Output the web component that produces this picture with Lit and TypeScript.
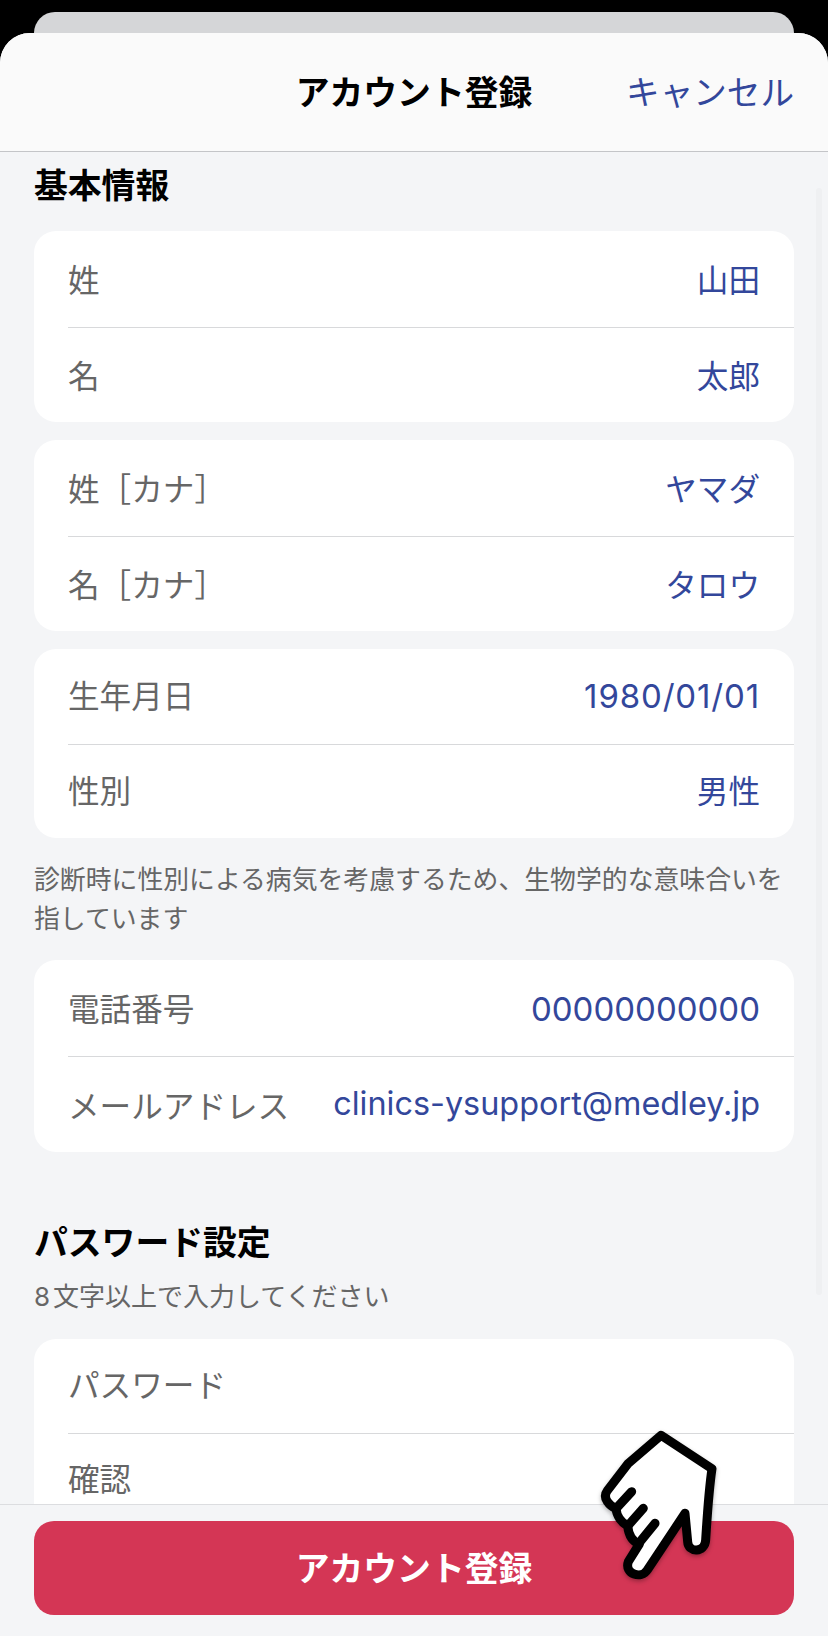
import { LitElement, html, css } from 'lit';
import { customElement } from 'lit/decorators.js';

type Row = { label: string; value?: string; kind?: 'latin' | 'date' | 'email' };

const group1: Row[] = [{ label: '姓', value: '山田' }, { label: '名', value: '太郎' }];
const group2: Row[] = [{ label: '姓［カナ］', value: 'ヤマダ' }, { label: '名［カナ］', value: 'タロウ' }];
const group3: Row[] = [{ label: '生年月日', value: '1980/01/01', kind: 'date' }, { label: '性別', value: '男性' }];
const group4: Row[] = [
  { label: '電話番号', value: '00000000000', kind: 'latin' },
  { label: 'メールアドレス', value: 'clinics-ysupport@medley.jp', kind: 'email' },
];
const group5: Row[] = [{ label: 'パスワード' }, { label: '確認' }];

@customElement('app-root')
export class AppRoot extends LitElement {
  static styles = css`
    :host {
      display: block;
      width: 828px;
      height: 1636px;
      overflow: hidden;
      position: relative;
      background: #000;
      font-family: 'Inter', 'Noto Sans CJK JP', sans-serif;
    }

    .peek {
      height: 21px;
      margin: 12px 34px 0;
      background: #d5d6d8;
      border-radius: 22px 22px 0 0;
    }

    .sheet {
      height: 1603px;
      display: flex;
      flex-direction: column;
      position: relative;
      background: #f4f5f7;
      border-radius: 30px 30px 0 0;
      overflow: hidden;
    }

    .header {
      flex: none;
      height: 118px;
      display: grid;
      grid-template-columns: 1fr auto 1fr;
      align-items: center;
      padding: 0 34px;
      background: #fafafa;
      border-bottom: 1px solid #c4c5c8;
    }

    .header h1 {
      grid-column: 2;
      margin: 0 0 4px;
      font-size: 33.8px;
      font-weight: 700;
      color: #000;
    }

    .cancel {
      justify-self: end;
      margin-bottom: 4px;
      font-size: 33.6px;
      color: #33479b;
    }

    .body {
      flex: 1;
      min-height: 0;
      overflow: hidden;
      padding: 9px 34px 0;
    }

    h2 {
      margin: 0 0 21px;
      font-size: 33.8px;
      line-height: 49px;
      font-weight: 700;
      color: #000;
    }

    .pw-title {
      margin: 65.5px 0 12px;
    }

    .card {
      background: #fff;
      border-radius: 22px;
      margin-bottom: 18px;
      padding-left: 34px;
    }

    .row {
      height: 95.5px;
      box-sizing: border-box;
      display: flex;
      align-items: center;
      justify-content: space-between;
      padding: 0 34px 2px 0;
      font-size: 31.6px;
    }

    .row + .row {
      border-top: 1px solid #d8d9db;
    }

    .compact .row {
      height: 94.5px;
      padding-bottom: 4px;
    }

    .tall .row {
      height: 96px;
    }

    .inputs .row {
      height: 94px;
      padding-bottom: 6px;
    }

    .label {
      color: #666;
    }

    .value {
      color: #33479b;
    }

    .value.latin {
      font-size: 33px;
      margin-top: 4px;
    }

    .value.date {
      font-size: 33px;
      letter-spacing: 0.85px;
      margin-top: 4px;
    }

    .value.email {
      font-size: 32.4px;
    }

    .note {
      margin: 22px 0;
      font-size: 25.85px;
      line-height: 39px;
      color: #666;
    }

    .sub {
      margin: 0 0 24px;
      font-size: 26px;
      line-height: 36px;
      color: #666;
    }

    .digit {
      margin-right: 3px;
    }

    .footer {
      flex: none;
      height: 132px;
      box-sizing: border-box;
      padding: 16px 34px 0;
      background: #f4f5f7;
      border-top: 1px solid #dcdde0;
    }

    .submit {
      height: 94px;
      box-sizing: border-box;
      padding-bottom: 4px;
      display: flex;
      align-items: center;
      justify-content: center;
      border-radius: 20px;
      background: #d43655;
      color: #fff;
      font-size: 33.8px;
      font-weight: 700;
    }

    .scrollbar {
      position: absolute;
      left: 816px;
      top: 155px;
      width: 6px;
      height: 1107px;
      border-radius: 3px;
      background: #eff0f2;
    }

    .hand {
      position: absolute;
      left: 560px;
      top: 1400px;
      width: 200px;
      height: 200px;
      filter: drop-shadow(0 2px 2px rgba(0, 0, 0, 0.3));
    }
  `;

  private card(rows: Row[], extra = '') {
    return html`
      <div class="card ${extra}">
        ${rows.map(
          (r) => html`
            <div class="row">
              <span class="label">${r.label}</span>
              ${r.value ? html`<span class="value ${r.kind ?? ''}">${r.value}</span>` : ''}
            </div>
          `
        )}
      </div>
    `;
  }

  render() {
    return html`
      <div class="peek"></div>
      <div class="sheet">
        <div class="header">
          <h1>アカウント登録</h1>
          <span class="cancel">キャンセル</span>
        </div>
        <div class="body">
          <h2>基本情報</h2>
          ${this.card(group1)}
          ${this.card(group2)}
          ${this.card(group3, 'compact')}
          <p class="note">診断時に性別による病気を考慮するため、生物学的な意味合いを指しています</p>
          ${this.card(group4, 'tall')}
          <h2 class="pw-title">パスワード設定</h2>
          <p class="sub"><span class="digit">8</span>文字以上で入力してください</p>
          ${this.card(group5, 'inputs')}
        </div>
        <div class="footer">
          <div class="submit">アカウント登録</div>
        </div>
        <div class="scrollbar"></div>
      </div>
      <svg class="hand" viewBox="0 0 600 600">
        <g fill="#fff" stroke="#000" stroke-width="27" stroke-linejoin="round" stroke-linecap="round">
          <path d="M303 106 L456 206 C448 260 442 340 437 420 C435 458 385 460 383 425 L375 340 L262 510 C245 538 192 522 205 485 L238 432 C218 425 206 405 203 378 C185 368 170 348 168 326 C150 318 125 295 142 272 L205 190 Z" />
          <path fill="none" d="M168 326 L215 275 M203 378 L250 325 M238 428 L285 370" />
        </g>
      </svg>
    `;
  }
}
